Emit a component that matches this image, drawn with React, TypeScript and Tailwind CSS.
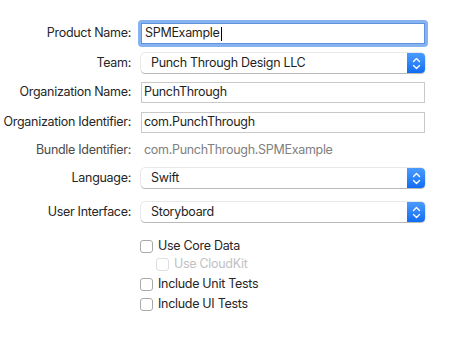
import React from "react";

const font = { fontFamily: "Inter, 'Noto Sans', sans-serif" };

function Stepper() {
  return (
    <div className="w-[18px] h-full rounded-r-[4px] bg-gradient-to-b from-[#4a9bff] to-[#0f6df2] flex items-center justify-center">
      <svg width="9" height="13" viewBox="0 0 9 13" fill="none">
        <path d="M1.5 4.5 L4.5 1.5 L7.5 4.5" stroke="white" strokeWidth="1.4" strokeLinecap="round" strokeLinejoin="round" />
        <path d="M1.5 8.5 L4.5 11.5 L7.5 8.5" stroke="white" strokeWidth="1.4" strokeLinecap="round" strokeLinejoin="round" />
      </svg>
    </div>
  );
}

function Label({ children, muted }: { children: React.ReactNode; muted?: boolean }) {
  return (
    <div className={`w-[131px] shrink-0 text-right whitespace-nowrap ${muted ? "text-[#4a4a4a]" : "text-[#262626]"}`}>
      {children}
    </div>
  );
}

function TextField({ value }: { value: string }) {
  return (
    <div className="w-[284px] h-[21px] border border-[#c9c9c9] bg-white flex items-center pl-[2px] text-[#1f1f1f]">
      {value}
    </div>
  );
}

function Popup({ value }: { value: string }) {
  return (
    <div className="w-[284px] h-[20px] rounded-[4px] bg-white flex items-stretch shadow-[0_0_0_0.5px_rgba(0,0,0,0.18),0_1px_0.5px_rgba(0,0,0,0.2)]">
      <div className="flex-1 flex items-center pl-[10px] text-[#1f1f1f]">{value}</div>
      <Stepper />
    </div>
  );
}

function Checkbox({ label, disabled }: { label: string; disabled?: boolean }) {
  return (
    <div className="flex items-center gap-[5px] h-[18px]">
      <div
        className={`w-[13px] h-[13px] rounded-[3px] bg-white border ${
          disabled ? "border-[#dedede]" : "border-[#a9a9a9]"
        }`}
      />
      <span className={disabled ? "text-[#c2c2c2]" : "text-[#262626]"}>{label}</span>
    </div>
  );
}

export default function App() {
  return (
    <div className="w-[464px] h-[354px] bg-white text-[12.5px] tracking-[-0.3px] leading-none" style={font}>
      <div className="flex flex-col pt-[20px]">
        {/* Product Name */}
        <div className="flex items-center h-[27px] gap-[7px]">
          <Label>Product Name:</Label>
          <div className="w-[290px] h-[27px] rounded-[4px] bg-[#86b2f0] p-[3px]">
            <div className="w-full h-full bg-white border border-[#5f93e0] flex items-center pl-[3px] text-[#1f1f1f]">
              SPMExample<span className="w-px h-[14px] bg-black ml-px" />
            </div>
          </div>
        </div>
        {/* Team */}
        <div className="flex items-center h-[20px] gap-[10px] mt-[6px]">
          <Label>Team:</Label>
          <Popup value="Punch Through Design LLC" />
        </div>
        <div className="flex items-center h-[21px] gap-[10px] mt-[9px]">
          <Label>Organization Name:</Label>
          <TextField value="PunchThrough" />
        </div>
        <div className="flex items-center h-[21px] gap-[10px] mt-[9px]">
          <Label>Organization Identifier:</Label>
          <TextField value="com.PunchThrough" />
        </div>
        <div className="flex items-center h-[20px] gap-[10px] mt-[7px]">
          <Label muted>Bundle Identifier:</Label>
          <div className="pl-[3px] text-[#808080]">com.PunchThrough.SPMExample</div>
        </div>
        <div className="flex items-center h-[20px] gap-[10px] mt-[8px]">
          <Label>Language:</Label>
          <Popup value="Swift" />
        </div>
        <div className="flex items-center h-[20px] gap-[10px] mt-[14px]">
          <Label>User Interface:</Label>
          <Popup value="Storyboard" />
        </div>
        <div className="flex flex-col pl-[140px] mt-[15px] gap-[2px]">
          <Checkbox label="Use Core Data" />
          <div className="pl-[16px] -mt-[2px]">
            <Checkbox label="Use CloudKit" disabled />
          </div>
          <Checkbox label="Include Unit Tests" />
          <Checkbox label="Include UI Tests" />
        </div>
      </div>
    </div>
  );
}
